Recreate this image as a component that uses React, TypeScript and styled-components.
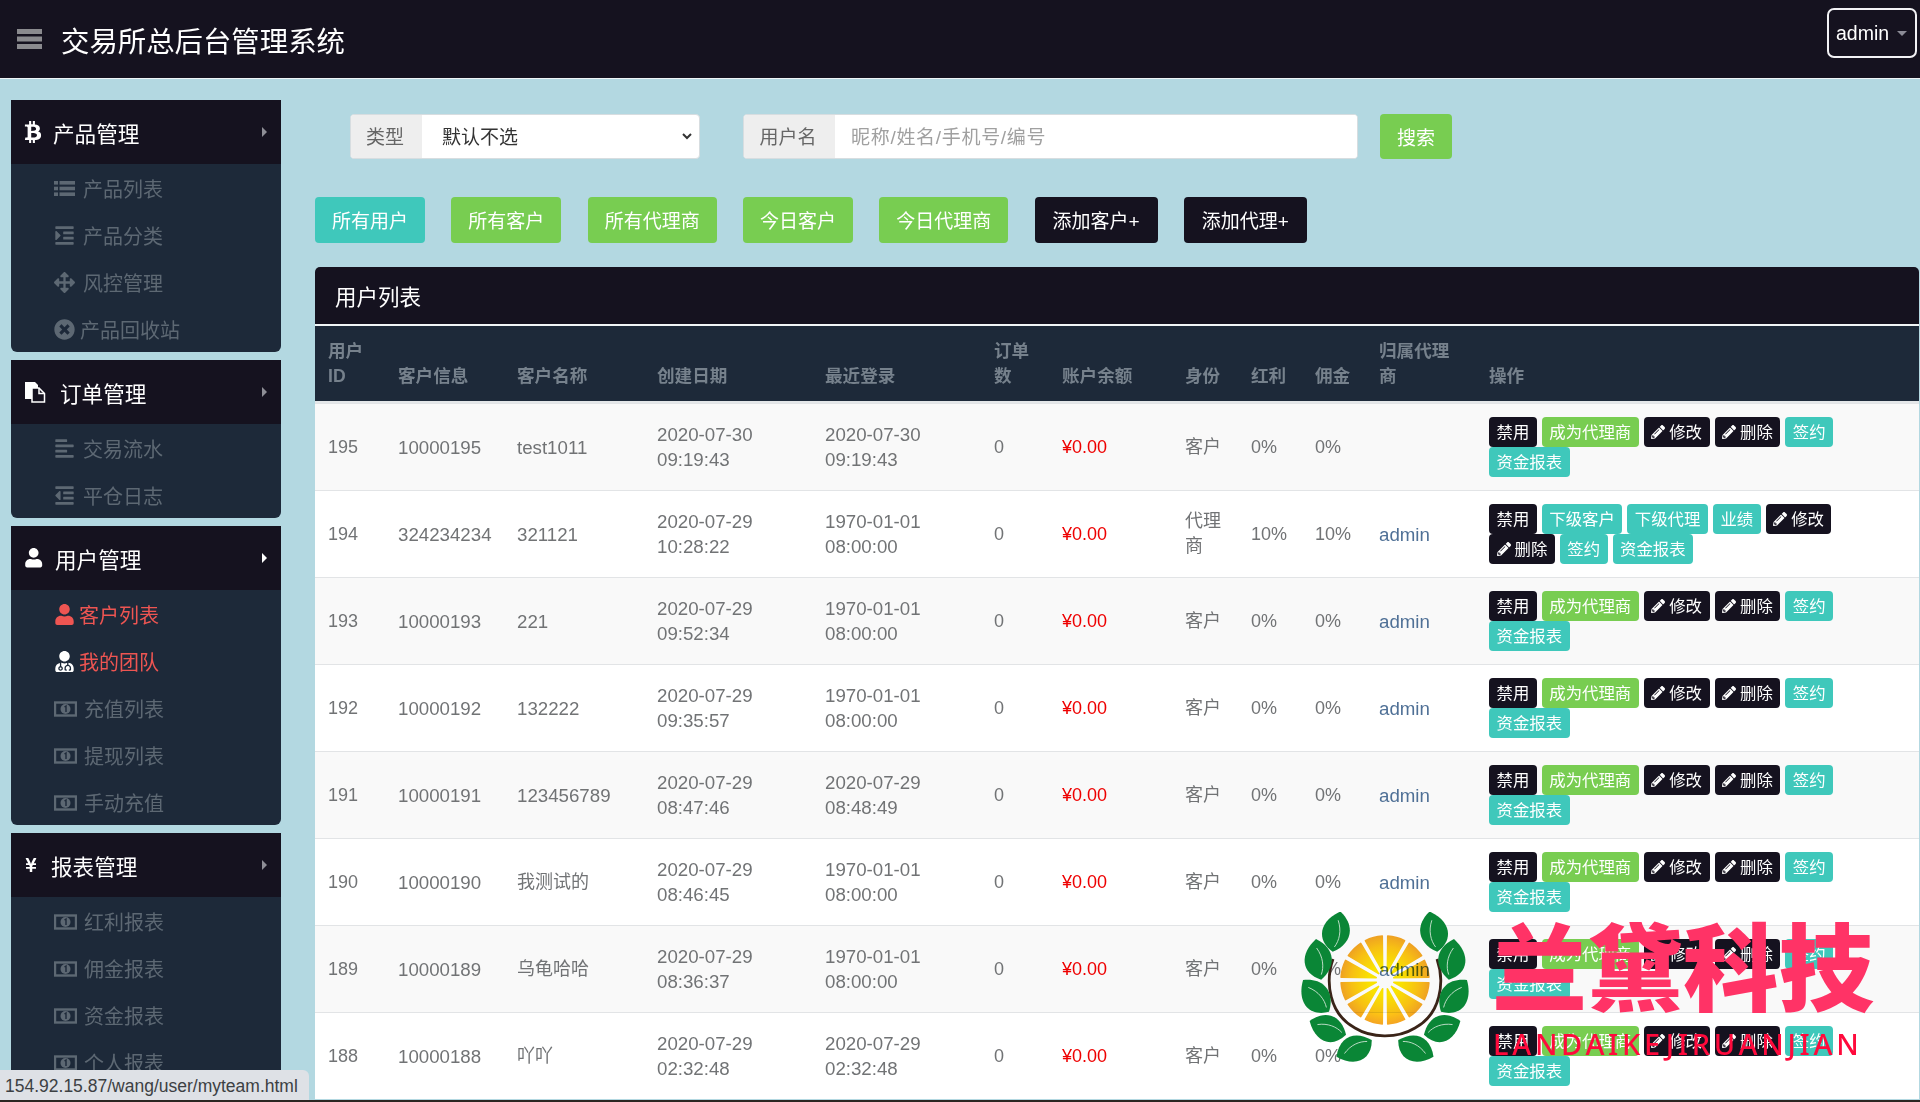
import React from 'react';
import styled, { createGlobalStyle } from 'styled-components';
import {
  FaAlignLeft, FaArrowsAlt, FaBtc, FaIndent, FaOutdent, FaPencilAlt,
  FaTimesCircle, FaUser, FaUserMd, FaYenSign,
} from 'react-icons/fa';

const FONT = `"Liberation Sans", "Noto Sans CJK SC", sans-serif`;
const DARK = '#15121f';
const NAVY = '#1d2939';
const GREEN = '#78cd51';
const TEAL = '#3fc8bb';

const Global = createGlobalStyle`
  html, body { margin: 0; padding: 0; background: #b3d8e1; }
  * { box-sizing: border-box; }
  body { font-family: ${FONT}; }
`;

const Page = styled.div`
  position: relative;
  width: 1920px;
  height: 1102px;
  overflow: hidden;
  background: #b3d8e1;
  border-bottom: 2px solid #2b2622;
  display: flex;
  flex-direction: column;
`;

const TopBar = styled.header`
  flex: none;
  height: 79px;
  background: ${DARK};
  border-bottom: 1px solid #eef4f6;
  display: flex;
  align-items: center;
  padding: 0 3px 0 17px;
`;
const Burger = styled.svg`
  flex: none;
  margin-right: 19px;
`;
const Title = styled.h1`
  margin: 0;
  flex: 1;
  font-size: 28.4px;
  font-weight: 400;
  color: #fff;
`;
const AdminButton = styled.div`
  width: 90px;
  height: 50px;
  margin-top: -12px;
  border: 2px solid #f2f2f5;
  border-radius: 7px;
  display: flex;
  align-items: center;
  padding-left: 7px;
  color: #fff;
  font-size: 19.5px;
`;
const Caret = styled.i`
  margin-left: 8px;
  border-top: 5px solid #8b8b96;
  border-left: 5px solid transparent;
  border-right: 5px solid transparent;
`;

const Body = styled.div`
  flex: 1;
  min-height: 0;
  display: flex;
`;

const Sidebar = styled.aside`
  flex: none;
  width: 270px;
  margin-left: 11px;
  padding-top: 21px;
  display: flex;
  flex-direction: column;
  gap: 8px;
`;
const Group = styled.section`
  background: ${NAVY};
  border-radius: 0 0 6px 6px;
`;
const GroupHead = styled.div`
  height: 64px;
  background: ${DARK};
  display: flex;
  align-items: center;
  padding-right: 14px;
  color: #fff;
  font-size: 21.6px;
`;
const HeadIcon = styled.span<{ $size: number; $left: number; $gap: number }>`
  display: flex;
  font-size: ${(p) => p.$size}px;
  margin: 0 ${(p) => p.$gap}px 0 ${(p) => p.$left}px;
`;
const HeadLabel = styled.span`
  flex: 1;
`;
const Arrow = styled.i<{ $open?: boolean }>`
  border-left: 5px solid ${(p) => (p.$open ? '#fff' : '#8e8e96')};
  border-top: 5px solid transparent;
  border-bottom: 5px solid transparent;
`;
const Item = styled.div<{ $active?: boolean }>`
  height: 47px;
  padding: 2px 0 0 43px;
  display: flex;
  align-items: center;
  font-size: 20px;
  color: ${(p) => (p.$active ? '#ee5552' : '#5d6873')};
`;
const ItemIcon = styled.span<{ $gap: number; $white?: boolean }>`
  display: flex;
  font-size: 21px;
  margin-right: ${(p) => p.$gap}px;
  ${(p) => (p.$white ? 'color: #fff;' : '')}
`;

const Main = styled.main`
  flex: 1;
  min-width: 0;
  margin-left: 34px;
  padding: 35px 1px 0 0;
`;
const SearchRow = styled.form`
  height: 45px;
  margin: 0 0 38px 35px;
  display: flex;
`;
const InputGroup = styled.div<{ $w: number; $gap: number }>`
  width: ${(p) => p.$w}px;
  margin-right: ${(p) => p.$gap}px;
  display: flex;
  background: #fff;
  border: 1px solid #d7dde0;
  border-radius: 4px;
  overflow: hidden;
`;
const Addon = styled.span<{ $w: number }>`
  flex: none;
  width: ${(p) => p.$w}px;
  padding: 0 3px 2px 0;
  background: #eee;
  color: #666;
  font-size: 19px;
  display: flex;
  align-items: center;
  justify-content: center;
`;
const Select = styled.select`
  flex: 1;
  min-width: 0;
  margin-right: 4px;
  border: 0;
  outline: 0;
  background: #fff;
  padding: 2px 0 0 16px;
  font: 19px ${FONT};
  color: #333;
`;
const TextInput = styled.input`
  flex: 1;
  min-width: 0;
  border: 0;
  outline: 0;
  padding: 2px 0 0 16px;
  font: 19px ${FONT};
  &::placeholder { color: #a0a0a0; letter-spacing: 0.7px; }
`;
const SearchButton = styled.button`
  width: 72px;
  border: 0;
  border-radius: 4px;
  background: ${GREEN};
  color: #fff;
  font: 19px ${FONT};
`;
const ToolRow = styled.div`
  display: flex;
  gap: 26.3px;
`;
const ToolButton = styled.a<{ $tone: string }>`
  height: 46px;
  min-width: 110px;
  padding: 0 17px 2px;
  border-radius: 4px;
  display: flex;
  align-items: center;
  justify-content: center;
  background: ${(p) => p.$tone};
  color: #fff;
  font-size: 19px;
`;
const AddButton = styled(ToolButton)`
  min-width: 123px;
`;

const Panel = styled.section`
  margin-top: 24px;
  border-radius: 5px 5px 0 0;
  overflow: hidden;
`;
const PanelTitle = styled.div`
  height: 59px;
  background: ${DARK};
  border-bottom: 2px solid #f1f5f6;
  display: flex;
  align-items: center;
  padding-left: 20px;
  color: #fff;
  font-size: 21.5px;
`;
const Table = styled.table`
  width: 100%;
  table-layout: fixed;
  border-collapse: separate;
  border-spacing: 0;
  font-size: 18px;
`;
const Th = styled.th<{ $w?: number }>`
  ${(p) => (p.$w ? `width: ${p.$w}px;` : '')}
  height: 77px;
  padding: 0 13px 12px;
  background: ${NAVY};
  border-bottom: 2px solid #e4e7e9;
  vertical-align: bottom;
  text-align: left;
  line-height: 25px;
  font-size: 17.6px;
  font-weight: 700;
  color: #76818c;
`;
const Row = styled.tr<{ $odd: boolean }>`
  background: ${(p) => (p.$odd ? '#f9f9f9' : '#fff')};
`;
const Td = styled.td<{ $big?: boolean }>`
  height: 87px;
  padding: 0 13px;
  border-top: 1px solid #e2e4e6;
  line-height: 25px;
  color: #717375;
  vertical-align: middle;
  ${(p) => (p.$big ? 'font-size: 18.7px; white-space: nowrap;' : '')}
`;
const Money = styled.span`
  color: #ee0000;
`;
const AgentLink = styled.a`
  color: #4f7096;
`;
const ActionCell = styled(Td)`
  padding: 0 25px 0 13px;
`;
const Actions = styled.div`
  display: flex;
  flex-wrap: wrap;
  column-gap: 5px;
`;
const ActionButton = styled.a<{ $tone: string }>`
  height: 30px;
  padding: 0 7.5px;
  border-radius: 4px;
  display: flex;
  align-items: center;
  gap: 4px;
  background: ${(p) => p.$tone};
  color: #fff;
  font-size: 16.4px;
  line-height: 1;
  & svg { font-size: 14px; }
`;

const StatusTip = styled.div`
  position: absolute;
  left: 0;
  bottom: 0;
  width: 309px;
  height: 30px;
  padding: 3px 0 0 5px;
  background: #dee1e6;
  border-radius: 0 6px 0 0;
  display: flex;
  align-items: center;
  color: #3c4043;
  font-size: 17.5px;
  white-space: nowrap;
`;
const Logo = styled.svg`
  position: absolute;
  left: 1299px;
  top: 912px;
`;
const Brand = styled.div`
  position: absolute;
  left: 1492px;
  top: 906px;
  color: #ff3366;
  font: 900 95.5px/1.2 "Noto Sans CJK SC", sans-serif;
  white-space: nowrap;
`;
const BrandLatin = styled.div`
  position: absolute;
  left: 1493px;
  top: 1026px;
  color: #ff0a3c;
  font: 500 29px/36px "Noto Sans", sans-serif;
  letter-spacing: 3.7px;
  white-space: nowrap;
`;

const MoneyIcon = () => (
  <svg width="23" height="16" viewBox="0 0 23 16">
    <rect x="1" y="1.500" width="21" height="13" fill="none" stroke="currentColor" strokeWidth="2.400" />
    <circle cx="11.500" cy="8" r="5" fill="currentColor" />
    <path d="M10.500 6l1.500-1v6" fill="none" stroke={NAVY} strokeWidth="1.400" />
  </svg>
);

const ListIcon = () => (
  <svg width="21" height="17" viewBox="0 0 21 17" fill="currentColor">
    <rect x="0" y="1" width="4" height="3.600" />
    <rect x="0" y="6.700" width="4" height="3.600" />
    <rect x="0" y="12.400" width="4" height="3.600" />
    <rect x="5.500" y="1" width="15.500" height="3.600" />
    <rect x="5.500" y="6.700" width="15.500" height="3.600" />
    <rect x="5.500" y="12.400" width="15.500" height="3.600" />
  </svg>
);

const FilesIcon = () => (
  <svg width="21" height="22" viewBox="0 0 21 22">
    <path d="M0 1h10l3 3v14H0z" fill="#fff" />
    <path d="M7 7h7l5.500 5.500V21H7z" fill={DARK} stroke="#fff" strokeWidth="1.500" />
    <path d="M14 7v5.500h5.500" fill="none" stroke="#fff" strokeWidth="1.500" />
  </svg>
);

const MENU = [
  {
    head: '产品管理', icon: <FaBtc />, size: 22, left: 11, gap: 9,
    items: [
      { t: '产品列表', i: <ListIcon />, g: 8 },
      { t: '产品分类', i: <FaIndent />, g: 8 },
      { t: '风控管理', i: <FaArrowsAlt />, g: 8 },
      { t: '产品回收站', i: <FaTimesCircle />, g: 5 },
    ],
  },
  {
    head: '订单管理', icon: <FilesIcon />, size: 21, left: 14, gap: 14,
    items: [
      { t: '交易流水', i: <FaAlignLeft />, g: 8 },
      { t: '平仓日志', i: <FaOutdent />, g: 8 },
    ],
  },
  {
    head: '用户管理', icon: <FaUser />, size: 19.4, left: 13, gap: 11.6, open: true,
    items: [
      { t: '客户列表', i: <FaUser />, g: 4 },
      { t: '我的团队', i: <FaUserMd />, g: 4, white: true },
      { t: '充值列表', i: <MoneyIcon />, g: 7 },
      { t: '提现列表', i: <MoneyIcon />, g: 7 },
      { t: '手动充值', i: <MoneyIcon />, g: 7 },
    ].map((it, i) => ({ ...it, active: i < 2 })),
  },
  {
    head: '报表管理', icon: <FaYenSign />, size: 16, left: 12, gap: 12,
    items: [
      { t: '红利报表', i: <MoneyIcon />, g: 7 },
      { t: '佣金报表', i: <MoneyIcon />, g: 7 },
      { t: '资金报表', i: <MoneyIcon />, g: 7 },
      { t: '个人报表', i: <MoneyIcon />, g: 7 },
    ],
  },
];

const COLUMNS: [string, number | undefined][] = [
  ['用户ID', 70], ['客户信息', 119], ['客户名称', 140], ['创建日期', 168], ['最近登录', 169],
  ['订单数', 68], ['账户余额', 123], ['身份', 66], ['红利', 64], ['佣金', 64], ['归属代理商', 110], ['操作', undefined],
];

const ROWS = [
  { id: 195, no: '10000195', name: 'test1011', c: ['2020-07-30', '09:19:43'], l: ['2020-07-30', '09:19:43'], agent: '' },
  { id: 194, no: '324234234', name: '321121', c: ['2020-07-29', '10:28:22'], l: ['1970-01-01', '08:00:00'], agent: 'admin', isAgent: true },
  { id: 193, no: '10000193', name: '221', c: ['2020-07-29', '09:52:34'], l: ['1970-01-01', '08:00:00'], agent: 'admin' },
  { id: 192, no: '10000192', name: '132222', c: ['2020-07-29', '09:35:57'], l: ['1970-01-01', '08:00:00'], agent: 'admin' },
  { id: 191, no: '10000191', name: '123456789', c: ['2020-07-29', '08:47:46'], l: ['2020-07-29', '08:48:49'], agent: 'admin' },
  { id: 190, no: '10000190', name: '我测试的', c: ['2020-07-29', '08:46:45'], l: ['1970-01-01', '08:00:00'], agent: 'admin' },
  { id: 189, no: '10000189', name: '乌龟哈哈', c: ['2020-07-29', '08:36:37'], l: ['1970-01-01', '08:00:00'], agent: 'admin' },
  { id: 188, no: '10000188', name: '吖吖', c: ['2020-07-29', '02:32:48'], l: ['2020-07-29', '02:32:48'], agent: '' },
];

const LEAVES: [number, number, number, number][] = [
  [36.5, 20, 8, 1],
  [18.7, 48, -10, 1],
  [16.6, 85, -42, 1],
  [29, 117, -72, 0.95],
  [56, 137, -118, 0.95],
];

const polar = (r: number, a: number) => {
  const rad = (a * Math.PI) / 180;
  return `${(86 + r * Math.sin(rad)).toFixed(2)} ${(68 - r * Math.cos(rad)).toFixed(2)}`;
};
const wedge = (mid: number) => {
  const inner = 9;
  const outer = 44;
  const half = 11.5;
  return `M${polar(inner, mid)} L${polar(outer, mid - half)} A${outer} ${outer} 0 0 1 ${polar(outer, mid + half)} Z`;
};

const Leaf = () => (
  <>
    <path d="M2 -21 C20 -8 17 10 0 20 C-19 10 -17 -9 2 -21Z" fill="#0a8636" />
    <path d="M1 -12 C6 -2 5 8 1 15" fill="none" stroke="#d8eadc" strokeWidth="0.800" />
  </>
);

const Crest = () => (
  <Logo width="172" height="150" viewBox="0 0 172 150" aria-hidden="true">
    <defs>
      <radialGradient id="pulp" gradientUnits="userSpaceOnUse" cx="86" cy="68" r="45">
        <stop offset="0.35" stopColor="#ffe800" />
        <stop offset="0.75" stopColor="#fdc414" />
        <stop offset="1" stopColor="#f4a423" />
      </radialGradient>
    </defs>
    <g style={{ mixBlendMode: 'multiply' }} fill="url(#pulp)" stroke="url(#pulp)" strokeWidth="1.500" strokeLinejoin="round">
      {Array.from({ length: 12 }, (_, i) => (
        <path key={i} d={wedge(15 + i * 30)} />
      ))}
    </g>
    <path d="M34 47 C26 70 30 102 56 116 C72 126 98 127 116 116 C142 102 146 70 138 47" fill="none" stroke="#3a2418" strokeWidth="2.800" />
    {LEAVES.map(([x, y, r, s], i) => (
      <g key={i}>
        <g transform={`translate(${x} ${y}) rotate(${r}) scale(${s})`}><Leaf /></g>
        <g transform={`translate(${172 - x} ${y}) scale(-1 1) rotate(${r}) scale(${s})`}><Leaf /></g>
      </g>
    ))}
  </Logo>
);

const Disable = () => <ActionButton $tone={DARK}>禁用</ActionButton>;
const Edit = () => <ActionButton $tone={DARK}><FaPencilAlt />修改</ActionButton>;
const Remove = () => <ActionButton $tone={DARK}><FaPencilAlt />删除</ActionButton>;
const Sign = () => <ActionButton $tone={TEAL}>签约</ActionButton>;
const Funds = () => <ActionButton $tone={TEAL}>资金报表</ActionButton>;

const CustomerActions = () => (
  <Actions>
    <Disable />
    <ActionButton $tone={GREEN}>成为代理商</ActionButton>
    <Edit />
    <Remove />
    <Sign />
    <Funds />
  </Actions>
);
const AgentActions = () => (
  <Actions>
    <Disable />
    <ActionButton $tone={TEAL}>下级客户</ActionButton>
    <ActionButton $tone={TEAL}>下级代理</ActionButton>
    <ActionButton $tone={TEAL}>业绩</ActionButton>
    <Edit />
    <Remove />
    <Sign />
    <Funds />
  </Actions>
);

const isLatin = (s: string) => /^[\x00-\x7f]*$/.test(s);

export default function App() {
  return (
    <Page>
      <Global />
      <TopBar>
        <Burger width="25" height="20" viewBox="0 0 25 20" aria-hidden="true" fill="#8a8a8e">
          <rect y="0" width="25" height="5" />
          <rect y="7.500" width="25" height="5" />
          <rect y="15" width="25" height="5" />
        </Burger>
        <Title>交易所总后台管理系统</Title>
        <AdminButton>admin<Caret /></AdminButton>
      </TopBar>
      <Body>
        <Sidebar>
          {MENU.map((g: any) => (
            <Group key={g.head}>
              <GroupHead>
                <HeadIcon $size={g.size} $left={g.left} $gap={g.gap}>{g.icon}</HeadIcon>
                <HeadLabel>{g.head}</HeadLabel>
                <Arrow $open={g.open} />
              </GroupHead>
              {g.items.map((it: any) => (
                <Item key={it.t} $active={it.active}>
                  <ItemIcon $gap={it.g} $white={it.white}>{it.i}</ItemIcon>
                  {it.t}
                </Item>
              ))}
            </Group>
          ))}
        </Sidebar>
        <Main>
          <SearchRow>
            <InputGroup $w={350} $gap={43}>
              <Addon $w={71}>类型</Addon>
              <Select defaultValue="">
                <option value="">默认不选</option>
              </Select>
            </InputGroup>
            <InputGroup $w={615} $gap={22}>
              <Addon $w={91}>用户名</Addon>
              <TextInput placeholder="昵称/姓名/手机号/编号" />
            </InputGroup>
            <SearchButton type="button">搜索</SearchButton>
          </SearchRow>
          <ToolRow>
            <ToolButton $tone={TEAL}>所有用户</ToolButton>
            <ToolButton $tone={GREEN}>所有客户</ToolButton>
            <ToolButton $tone={GREEN}>所有代理商</ToolButton>
            <ToolButton $tone={GREEN}>今日客户</ToolButton>
            <ToolButton $tone={GREEN}>今日代理商</ToolButton>
            <AddButton $tone={DARK}>添加客户+</AddButton>
            <AddButton $tone={DARK}>添加代理+</AddButton>
          </ToolRow>
          <Panel>
            <PanelTitle>用户列表</PanelTitle>
            <Table>
              <thead>
                <tr>
                  {COLUMNS.map(([label, w]) => (
                    <Th key={label} $w={w}>{label}</Th>
                  ))}
                </tr>
              </thead>
              <tbody>
                {ROWS.map((r, i) => (
                  <Row key={r.id} $odd={i % 2 === 0}>
                    <Td>{r.id}</Td>
                    <Td $big>{r.no}</Td>
                    <Td $big={isLatin(r.name)}>{r.name}</Td>
                    <Td $big>{r.c[0]}<br />{r.c[1]}</Td>
                    <Td $big>{r.l[0]}<br />{r.l[1]}</Td>
                    <Td>0</Td>
                    <Td><Money>¥0.00</Money></Td>
                    <Td>{r.isAgent ? '代理商' : '客户'}</Td>
                    <Td>{r.isAgent ? '10%' : '0%'}</Td>
                    <Td>{r.isAgent ? '10%' : '0%'}</Td>
                    <Td $big><AgentLink>{r.agent}</AgentLink></Td>
                    <ActionCell>{r.isAgent ? <AgentActions /> : <CustomerActions />}</ActionCell>
                  </Row>
                ))}
              </tbody>
            </Table>
          </Panel>
        </Main>
      </Body>
      <Crest />
      <Brand>兰黛科技</Brand>
      <BrandLatin>LANDAIKEJIRUANJIAN</BrandLatin>
      <StatusTip>154.92.15.87/wang/user/myteam.html</StatusTip>
    </Page>
  );
}
